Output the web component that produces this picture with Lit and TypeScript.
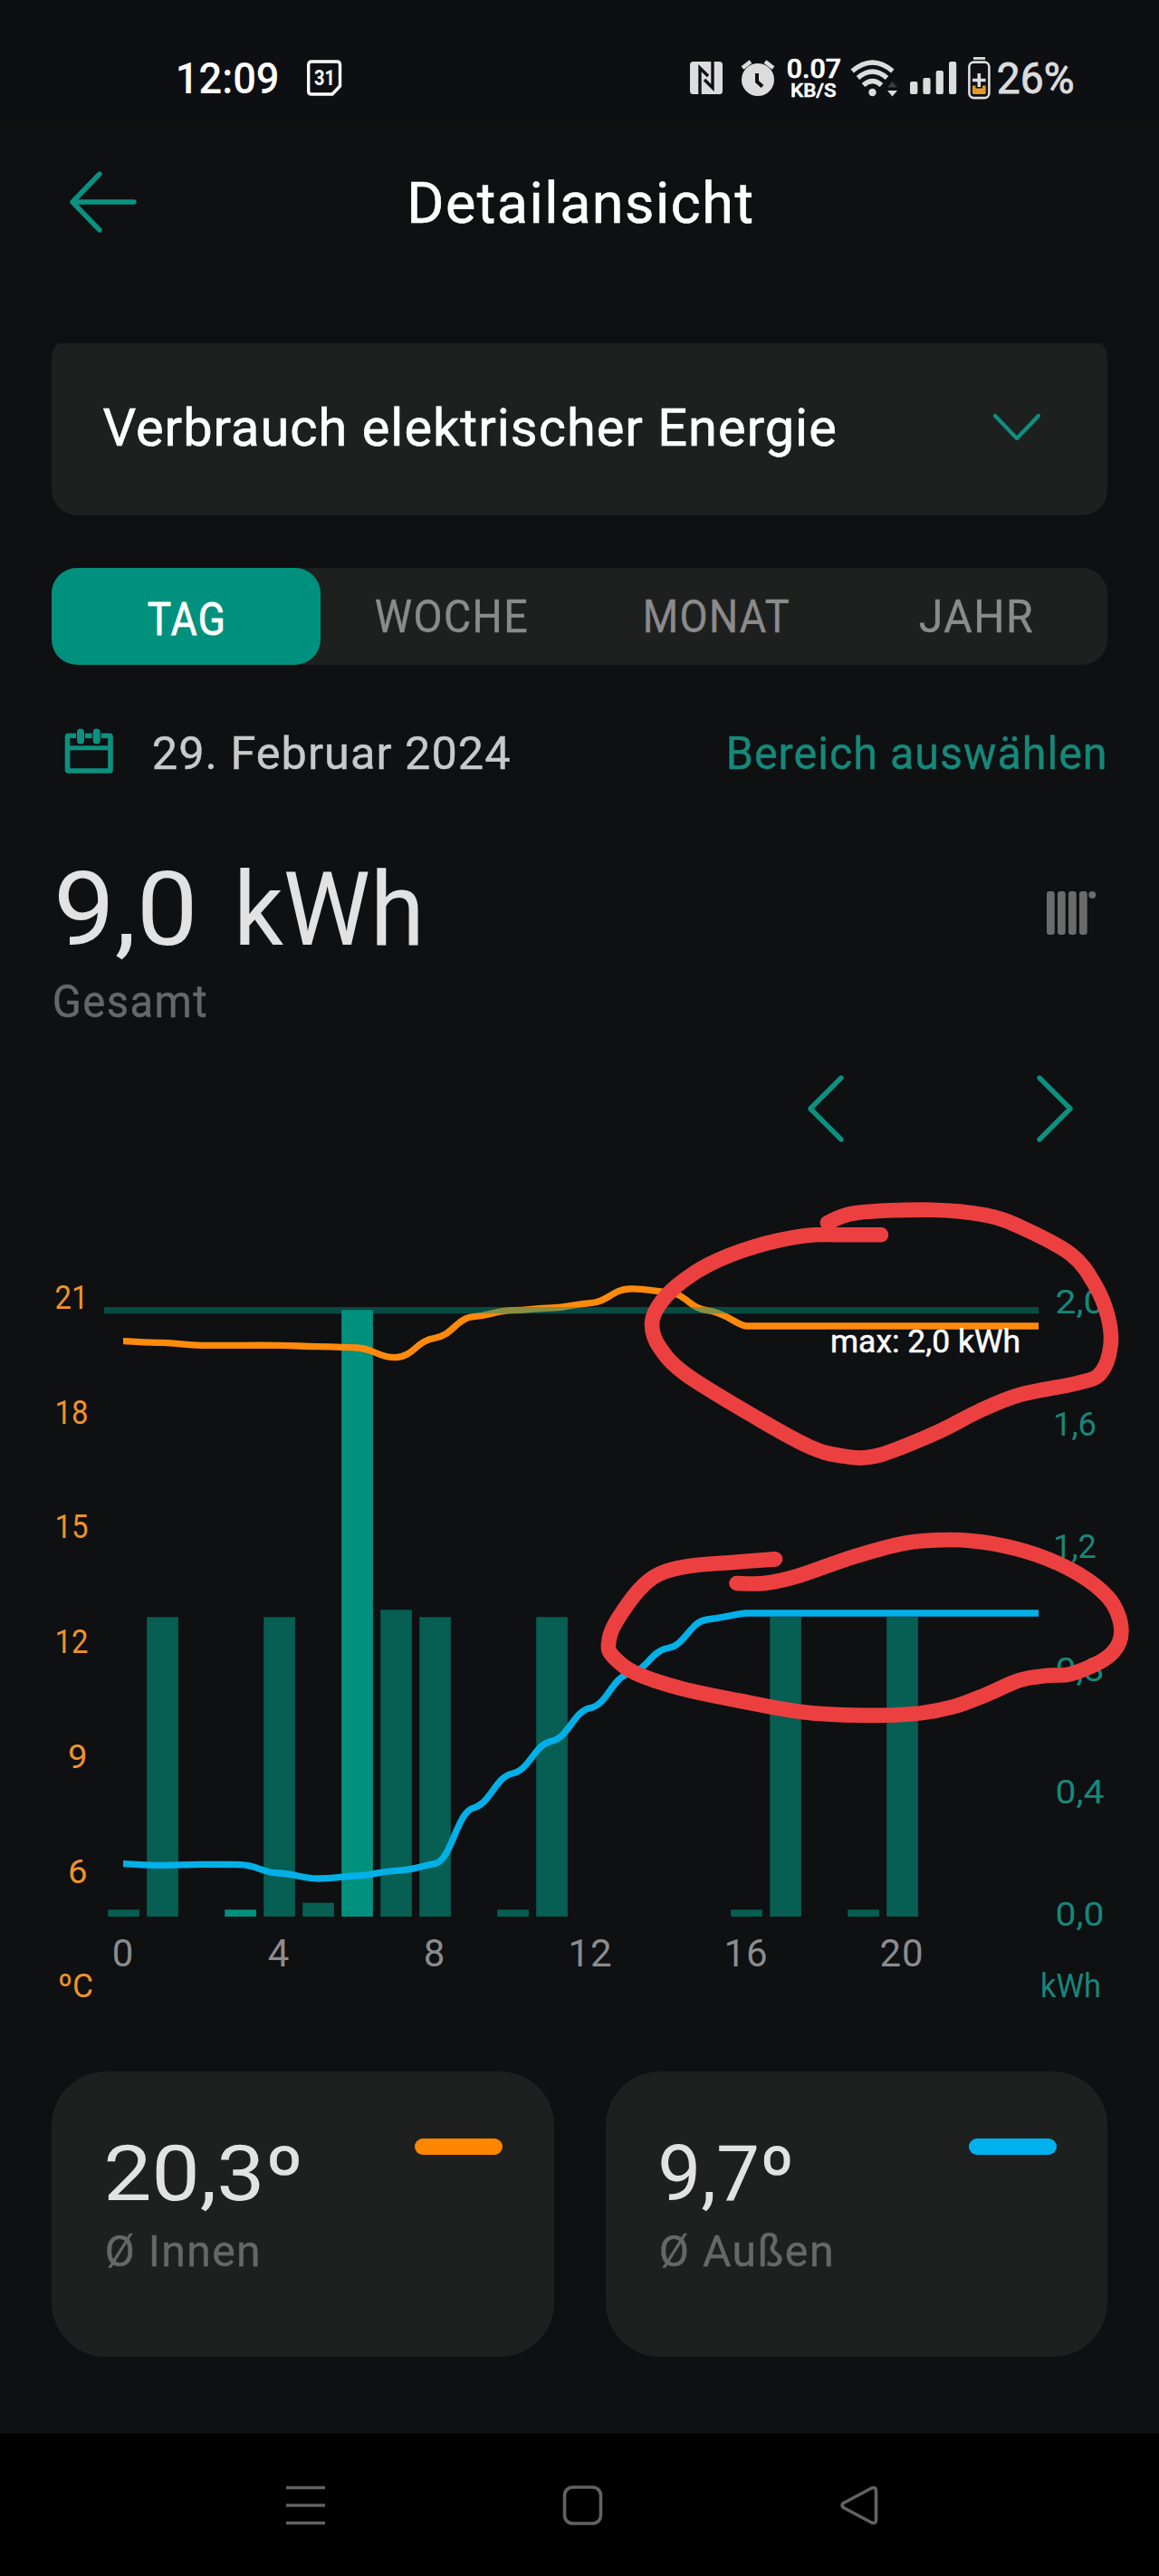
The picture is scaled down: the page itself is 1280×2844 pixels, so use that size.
import { LitElement, html, svg, css } from "lit";
import { customElement, property } from "lit/decorators.js";

const CAP = 0.711;

/** A line of text whose box is exactly its cap height, fitted to a given width. */
@customElement("fit-label")
class FitLabel extends LitElement {
  @property() text = "";
  @property({ type: Number }) w = 100;
  @property({ type: Number }) size = 48;
  @property({ type: Number }) weight = 400;
  @property({ type: Number }) track = 0;
  @property({ type: Number }) bold = 0;

  static styles = css`
    :host { display: block; flex: none; line-height: 0; }
    svg { display: block; overflow: visible; }
    text { font-family: Roboto, "Liberation Sans", sans-serif; fill: currentColor; stroke: currentColor; white-space: pre; }
  `;

  render() {
    const h = this.size * CAP;
    const bearing = this.size * 0.045;
    return html`<svg width=${this.w} height=${h}>
      <text x=${-bearing} y=${h} font-size=${this.size} font-weight=${this.weight}
        letter-spacing=${this.track} stroke-width=${this.bold}
        textLength=${this.w + bearing * 1.7 + this.track} lengthAdjust="spacingAndGlyphs">${this.text}</text>
    </svg>`;
  }
}

@customElement("status-bar")
class StatusBar extends LitElement {
  static styles = css`
    :host { display: flex; height: 133px; box-sizing: border-box; padding: 0 95px 0 196px; background: #0d0f12; color: #fff; }
    svg { display: block; flex: none; overflow: visible; }
    .left, .right { display: flex; align-items: center; height: 48px; margin-top: 62px; }
    .left { gap: 32px; }
    .right { margin-left: auto; color: #dcdcdc; }
    .cal text { font: 700 23px Roboto, sans-serif; fill: #fff; }
    .rate { display: flex; flex-direction: column; align-items: center; gap: 5.500px; width: 59px; color: #fff; margin: 0 11px 0 13px; }
    .nfc { margin-right: 20px; }
    .sig { margin: 0 13px 0 13px; }
    .bat { margin-right: 9px; }
  `;
  render() {
    return html`
      <div class="left">
        <fit-label text="12:09" w="111" size="48" weight="500"></fit-label>
        <svg class="cal" width="38" height="40" viewBox="0 0 38 40">
          <path d="M5 2H33Q36.500 2 36.500 5.500V29L28 38H5Q1.700 38 1.700 35V5.500Q1.700 2 5 2Z" fill="none" stroke="#fff" stroke-width="3.400"/>
          <text x="8" y="28" textLength="23" lengthAdjust="spacingAndGlyphs">31</text>
        </svg>
      </div>
      <div class="right">
        <svg class="nfc" width="36" height="36" viewBox="0 0 36 36">
          <rect width="36" height="36" rx="3.500" fill="#dcdcdc"/>
          <path d="M11 36V7L20 16M25 0V29L16 20" fill="none" stroke="#0d0f12" stroke-width="3.400"/>
        </svg>
        <svg width="38" height="40" viewBox="0 0 38 40">
          <circle cx="19" cy="22" r="18" fill="#dcdcdc"/>
          <path d="M2 9L11 2M36 9L27 2" stroke="#dcdcdc" stroke-width="4.600"/>
          <path d="M18 15V24L24 29.500" fill="none" stroke="#0d0f12" stroke-width="4"/>
        </svg>
        <div class="rate">
          <fit-label text="0.07" w="58" size="29.5" weight="500" bold="0.6"></fit-label>
          <fit-label text="KB/S" w="49" size="21" weight="500" bold="0.6"></fit-label>
        </div>
        <svg width="53" height="40" viewBox="0 0 53 40">
          <g fill="none" stroke="#dcdcdc" stroke-width="5.400">
            <path d="M2.200 12.500Q24.500 -6.500 46.800 12.500"/>
            <path d="M8.500 20Q24.500 6 40.500 20"/>
            <path d="M14.500 28Q24.500 19 34.500 28"/>
          </g>
          <circle cx="24.500" cy="36" r="4.200" fill="#dcdcdc"/>
          <path d="M41 30.500L46.500 24L52 30.500Z" fill="#3c3e40"/>
          <path d="M41 34L46.500 40.500L52 34Z" fill="#dcdcdc"/>
        </svg>
        <svg class="sig" width="51" height="36" viewBox="0 0 51 36" fill="#dcdcdc">
          <rect x="0" y="22" width="8.400" height="14" rx="2"/><rect x="14.400" y="18" width="8.200" height="18" rx="2"/>
          <rect x="28.700" y="10" width="8.200" height="26" rx="2"/><rect x="43" y="0" width="8.200" height="36" rx="2"/>
        </svg>
        <svg class="bat" width="25" height="46" viewBox="0 0 25 46">
          <rect x="6" y="0" width="13" height="2.800" fill="#dcdcdc"/>
          <rect x="1.400" y="5.600" width="22" height="39.500" rx="5" fill="none" stroke="#dcdcdc" stroke-width="2.600"/>
          <path d="M5 31.500H8.500V34.500H16V31.500H19.700V39.500Q19.700 41 18 41H6.700Q5 41 5 39.500Z" fill="#e29a26"/>
          <path d="M12.300 18V33M5 25.500H19.600" stroke="#dcdcdc" stroke-width="3.600"/>
        </svg>
        <fit-label text="26%" w="82" size="48" bold="0.9"></fit-label>
      </div>`;
  }
}

const STEP = 43;
const X0 = 136;
const BASE = 2116;
const INNER = [1480.7, 1482.3, 1485.3, 1485.3, 1485.3, 1486.7, 1488, 1498.7, 1477.3, 1453.7, 1446.7, 1444, 1438.7, 1423, 1426.7, 1446.7, 1464];
const OUTER = [2057.7, 2059.3, 2058.3, 2058.7, 2068, 2074, 2071, 2065.3, 2057.7, 1996, 1958, 1922.3, 1885.7, 1848, 1819.5, 1788, 1781];
const BARS: [number, number, boolean?][] = [
  [0, 7.7], [1, 330.7], [3, 7.7, true], [4, 330.7], [5, 15.3], [6, 669.7, true], [7, 338.7],
  [8, 330.7], [10, 7.7], [11, 330.7], [16, 7.7], [17, 330.7], [19, 7.7], [20, 330.7],
];
const MARK_A: number[][] = [
  [914, 1350], [946, 1339], [1028, 1335.7], [1089, 1341.7], [1130, 1356], [1183, 1385], [1209, 1418], [1223.5, 1453],
  [1226.5, 1486], [1215.5, 1516], [1191, 1526.7], [1126, 1540], [1081, 1558], [1032, 1582.7], [966.500, 1607.7],
  [926, 1606.7], [893, 1596.7], [840, 1568], [758, 1517.7], [728, 1486.7], [720, 1463], [726.5, 1443], [747, 1420],
  [783, 1396], [832, 1376.7], [889, 1364.3], [934, 1363.3], [973, 1363.3],
];
const MARK_B: number[][] = [
  [813.5, 1748], [844, 1748], [881, 1740], [942, 1719], [999, 1703.7], [1052, 1700], [1097, 1704.4], [1146, 1717],
  [1191, 1737.7], [1223.7, 1763.6], [1237, 1789.5], [1236, 1813.5], [1219.6, 1832], [1183, 1848], [1158, 1849.8],
  [1126, 1855], [1089, 1871], [1052, 1884.6], [1011, 1892], [950, 1893.8], [885, 1890], [815.5, 1877.5], [750, 1863.5],
  [701, 1846.8], [676.7, 1828.3], [672, 1815], [679, 1793], [705, 1756], [728, 1737.7], [762.5, 1728.8], [811.4, 1724.7], [856, 1721.4],
];

/** Cubic spline through the points; kx and ky set how far each tangent reaches. */
function spline(p: number[][], kx: number, ky: number): string {
  let d = `M${p[0][0]} ${p[0][1]}`;
  for (let i = 1; i < p.length; i++) {
    const a = p[Math.max(i - 2, 0)], b = p[i - 1], c = p[i], e = p[Math.min(i + 1, p.length - 1)];
    d += `C${b[0] + (c[0] - a[0]) * kx} ${b[1] + (c[1] - a[1]) * ky} ${c[0] - (e[0] - b[0]) * kx} ${c[1] - (e[1] - b[1]) * ky} ${c[0]} ${c[1]}`;
  }
  return d;
}
const series = (ys: number[]) => spline(ys.map((y, i) => [X0 + i * STEP, y]), 0.22, 0.05) + "H1147";

@customElement("energy-chart")
class EnergyChart extends LitElement {
  static styles = css`
    :host { display: block; }
    svg { display: block; }
    text { font-family: Roboto, "Liberation Sans", sans-serif; }
    .temp { fill: #f0922a; font-size: 36px; }
    .energy { fill: #17877a; font-size: 36px; }
    .hour { fill: #8c8c8e; font-size: 42px; text-anchor: middle; }
    .max { fill: #fff; stroke: #fff; stroke-width: .5; font-size: 35.500px; }
    .line { fill: none; stroke-width: 7.300; }
    .mark { fill: none; stroke: #ec4040; stroke-width: 16.600; stroke-linecap: round; stroke-linejoin: round; }
  `;
  render() {
    const fit = (cls: string, t: string, x: number, y: number, w: number) =>
      svg`<text class=${cls} x=${x} y=${y} textLength=${w} lengthAdjust="spacingAndGlyphs">${t}</text>`;
    return html`<svg width="1280" height="937" viewBox="0 1300 1280 937">
      ${BARS.map(([n, h, on]) => svg`<rect x=${X0 - 16.8 + n * STEP} y=${BASE - h} width="34.700" height=${h} fill=${on ? "#00917e" : "#075e53"}/>`)}
      <path class="line" stroke="#ff8a0c" d=${series(INNER)}/>
      <path class="line" stroke="#02b0e8" d=${series(OUTER)}/>
      <rect x="115" y="1443" width="1032" height="7.300" fill="#00917e" fill-opacity=".46"/>
      ${["21", "18", "15", "12", "9", "6"].map((t, i) =>
        fit("temp", t, t.length > 1 ? 60.5 : 75, 1444.7 + i * 126.85, t.length > 1 ? 37 : 21.5))}
      ${["2,0", "1,6", "1,2", "0,8", "0,4", "0,0"].map((t, i) =>
        fit("energy", t, t[0] === "1" ? 1163 : 1165.5, 1449.6 + i * 135.3, t[0] === "1" ? 48 : 54))}
      ${[0, 4, 8, 12, 16, 20].map((n) => svg`<text class="hour" x=${X0 + n * STEP} y="2170.700" letter-spacing="1">${n}</text>`)}
      ${fit("temp", "ºC", 64, 2205, 39)}
      ${fit("energy", "kWh", 1149, 2205, 67)}
      ${fit("max", "max: 2,0 kWh", 917, 1493, 210)}
      <path class="mark" d=${spline(MARK_A, 0.1667, 0.1667)}/>
      <path class="mark" d=${spline(MARK_B, 0.1667, 0.1667)}/>
    </svg>`;
  }
}

@customElement("average-card")
class AverageCard extends LitElement {
  @property() value = "";
  @property() label = "";
  @property({ type: Number }) vw = 200;
  @property({ type: Number }) lw = 170;
  @property() tone = "inside";
  static styles = css`
    :host { display: block; flex: 1; }
    .card { display: flex; justify-content: space-between; height: 315px; box-sizing: border-box; padding: 82px 56.500px 0 61px; background: #1e201f; border-radius: 60px; }
    .texts { display: flex; flex-direction: column; gap: 38px; }
    .value { color: #e2e2e2; }
    .label { color: #676767; }
    .pill { width: 97px; height: 18.500px; border-radius: 10px; margin-top: -8px; }
    .inside { background: #ff8700; }
    .outside { background: #02b2ee; }
  `;
  render() {
    return html`<div class="card">
      <div class="texts">
        <fit-label class="value" text=${this.value} w=${this.vw} size="85"></fit-label>
        <fit-label class="label" text=${this.label} w=${this.lw} size="49" track="1.5" bold="0.4"></fit-label>
      </div>
      <div class="pill ${this.tone}"></div>
    </div>`;
  }
}

@customElement("app-root")
class AppRoot extends LitElement {
  static styles = css`
    :host { display: flex; flex-direction: column; width: 1280px; height: 2844px; background: #0e1012; overflow: hidden; }
    svg { display: block; flex: none; overflow: visible; }
    .stroke { fill: none; stroke: #0c917f; stroke-width: 5.400; stroke-linecap: round; stroke-linejoin: round; }
    .thin { stroke-width: 4.200; }
    header { display: grid; grid-template-columns: 1fr auto 1fr; align-items: center; height: 180px; padding: 0 75px 0 77px; color: #fff; }
    .title { margin-top: 1.500px; }
    .select { display: flex; align-items: center; justify-content: space-between; height: 190px; margin: 66px 57px 0; padding: 0 74px 5px 59px; box-sizing: border-box; background: #1e201f; border-radius: 9px 9px 28px 28px / 20px 20px 28px 28px; color: #fff; }
    .tabs { display: grid; grid-template-columns: 297px 289px 290px 290px; height: 107px; margin: 57.500px 57px 0; background: #1e201f; border-radius: 28px; color: #8b8b8b; }
    .tab { display: flex; align-items: center; justify-content: center; padding-top: 1px; }
    .tab.on { background: #00917e; border-radius: 28px; color: #fff; padding-top: 8px; }
    .tab:nth-child(3) { padding-left: 5px; }
    .range { display: flex; align-items: center; height: 50px; margin: 70px 59px 0 72px; }
    .date { color: #c9c9c9; margin-left: 46px; margin-top: 7px; }
    .pick { color: #15897a; margin-left: auto; margin-top: 7px; }
    .total { display: flex; margin: 109px 70px 0 64px; height: 81px; }
    .sum { display: flex; gap: 48px; color: #e2e2e2; }
    .radiator { margin: 21px 0 0 auto; fill: #6b6b6b; }
    .caption { color: #676767; margin: 44.500px 0 0 60px; }
    .pager { display: flex; justify-content: flex-end; gap: 213px; margin: 64px 95px 0 0; }
    energy-chart { margin-top: 38.800px; }
    .cards { display: flex; gap: 57px; margin: 50px 57px 0; }
    nav { display: flex; justify-content: space-between; align-items: center; height: 157px; margin-top: auto; padding: 0 310px 0 316px; background: #000; box-sizing: border-box; }
    nav svg { fill: none; stroke: #626262; stroke-width: 3.600; stroke-linejoin: round; }
  `;
  render() {
    return html`
      <status-bar></status-bar>
      <header>
        <svg width="74" height="68" viewBox="0 0 74 68"><path class="stroke" d="M33 3L3 34L33 65M3 34H71"/></svg>
        <fit-label class="title" text="Detailansicht" w="378" size="63" track="1.5" bold="0.6"></fit-label>
      </header>
      <div class="select">
        <fit-label text="Verbrauch elektrischer Energie" w="806" size="57" track="1" bold="0.6"></fit-label>
        <svg width="52" height="30" viewBox="0 0 52 30"><path class="stroke thin" d="M2 2L26 27L50 2"/></svg>
      </div>
      <div class="tabs">
        <div class="tab on"><fit-label text="TAG" w="82" size="49.500" track="1.5" bold="0.8"></fit-label></div>
        <div class="tab"><fit-label text="WOCHE" w="165" size="49.500" track="1.5" bold="0.4"></fit-label></div>
        <div class="tab"><fit-label text="MONAT" w="158" size="49.500" track="1.5" bold="0.4"></fit-label></div>
        <div class="tab"><fit-label text="JAHR" w="122" size="49.500" track="1.5" bold="0.4"></fit-label></div>
      </div>
      <div class="range">
        <svg width="52" height="50" viewBox="0 0 52 50">
          <rect x="2.500" y="8.200" width="47.500" height="38.800" rx="1" fill="none" stroke="#0c917f" stroke-width="5.600"/>
          <path d="M3 21.800H49.500" stroke="#0c917f" stroke-width="5"/>
          <path d="M17 4.500V14.500M34.700 4.500V14.500" stroke="#0e1012" stroke-width="10" stroke-linecap="round"/>
          <path d="M17 4.500V13.500M34.700 4.500V13.500" stroke="#0c917f" stroke-width="8" stroke-linecap="round"/>
        </svg>
        <fit-label class="date" text="29. Februar 2024" w="392" size="49.500" track="1" bold="0.4"></fit-label>
        <fit-label class="pick" text="Bereich auswählen" w="417" size="49.500" track="1" bold="0.4"></fit-label>
      </div>
      <div class="total">
        <div class="sum">
          <fit-label text="9,0" w="151" size="113"></fit-label>
          <fit-label text="kWh" w="202" size="113"></fit-label>
        </div>
        <svg class="radiator" width="54" height="48" viewBox="0 0 54 48">
          <rect x="0" width="8.700" height="48" rx="3"/><rect x="12" width="8.700" height="48" rx="3"/>
          <rect x="24" width="8.700" height="48" rx="3"/><rect x="36" width="8.700" height="48" rx="3"/>
          <circle cx="50.300" cy="4" r="4"/>
        </svg>
      </div>
      <fit-label class="caption" text="Gesamt" w="167" size="49.500" track="1.5" bold="0.4"></fit-label>
      <div class="pager">
        <svg width="40" height="74" viewBox="0 0 40 74"><path class="stroke" d="M37 3L3 37L37 71"/></svg>
        <svg width="40" height="74" viewBox="0 0 40 74"><path class="stroke" d="M3 3L37 37L3 71"/></svg>
      </div>
      <energy-chart></energy-chart>
      <div class="cards">
        <average-card value="20,3º" label="Ø Innen" vw="215" lw="168" tone="inside"></average-card>
        <average-card value="9,7º" label="Ø Außen" vw="145" lw="189" tone="outside"></average-card>
      </div>
      <nav>
        <svg width="43" height="44" viewBox="0 0 43 44"><path d="M0 2.500H43M0 22H43M0 41.500H43"/></svg>
        <svg width="43" height="44" viewBox="0 0 43 44"><rect x="1.500" y="2" width="40" height="40" rx="9"/></svg>
        <svg width="42" height="44" viewBox="0 0 42 44"><path d="M3.500 19.500L34.500 3Q39.500 1 39.500 6V38Q39.500 43 34.500 41L3.500 24.500Q0.500 22 3.500 19.500Z"/></svg>
      </nav>`;
  }
}
